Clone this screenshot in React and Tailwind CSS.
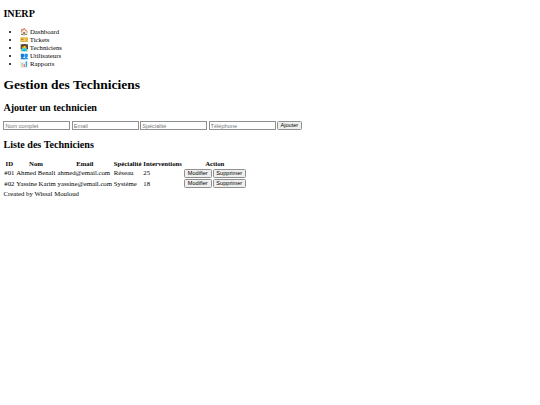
import React from 'react';

const navItems = [
  ['🏠', 'Dashboard'],
  ['🎫', 'Tickets'],
  ['🧑‍💻', 'Techniciens'],
  ['👥', 'Utilisateurs'],
  ['📊', 'Rapports'],
];

const techs = [
  { id: '#01', nom: 'Ahmed Benali', email: 'ahmed@email.com', spec: 'Réseau', nb: 25 },
  { id: '#02', nom: 'Yassine Karim', email: 'yassine@email.com', spec: 'Système', nb: 18 },
];

const inputCls =
  "w-[67px] h-[9px] border border-[#8f8f8f] bg-white px-px text-[5.6px] leading-none font-['Liberation_Sans',sans-serif] placeholder:text-[#757575]";
const btnCls =
  "h-[9px] px-[2.5px] border border-[#8f8f8f] rounded-[1.5px] bg-[#efefef] text-[5.6px] leading-none text-black font-['Liberation_Sans',sans-serif]";
const thCls = 'px-[0.9px] py-[0.5px] font-bold text-center';
const tdCls = 'px-[0.9px] py-[0.8px]';

export default function App() {
  return (
    <div className="min-h-[405px] bg-white px-[3.4px] text-[6.75px] leading-[7.8px] text-black opacity-[0.99] font-['Liberation_Serif',serif]">
      <header>
        <h2 className="pt-[8.4px] text-[10.125px] leading-[11.6px] font-bold">INERP</h2>
        <ul className="mt-[8.4px] list-disc pl-[16.9px]">
          {navItems.map(([icon, label]) => (
            <li key={label} className="h-[8px]">
              {icon} {label}
            </li>
          ))}
        </ul>
      </header>
      <h1 className="mt-[9px] text-[13.5px] leading-[15.5px] font-bold">Gestion des Techniciens</h1>
      <h2 className="mt-[9.4px] text-[10.125px] leading-[11.6px] font-bold">Ajouter un technicien</h2>
      <form className="mt-[7.4px] flex items-center gap-[1.4px]">
        <input className={inputCls} placeholder="Nom complet" />
        <input className={inputCls} placeholder="Email" />
        <input className={inputCls} placeholder="Spécialité" />
        <input className={inputCls} placeholder="Téléphone" />
        <button type="button" className={btnCls}>Ajouter</button>
      </form>
      <h2 className="mt-[8.4px] text-[10.125px] leading-[11.6px] font-bold">Liste des Techniciens</h2>
      <table className="mt-[9px] border-separate border-spacing-[0.84px]">
        <thead>
          <tr>
            <th className={thCls}>ID</th>
            <th className={thCls}>Nom</th>
            <th className={thCls}>Email</th>
            <th className={thCls}>Spécialité</th>
            <th className={thCls}>Interventions</th>
            <th className={thCls}>Action</th>
          </tr>
        </thead>
        <tbody>
          {techs.map((t) => (
            <tr key={t.id}>
              <td className={tdCls}>{t.id}</td>
              <td className={tdCls}>{t.nom}</td>
              <td className={tdCls}>{t.email}</td>
              <td className={tdCls}>{t.spec}</td>
              <td className={tdCls}>{t.nb}</td>
              <td className={tdCls}>
                <div className="flex gap-[1px]">
                  <button type="button" className={`${btnCls} w-[28px]`}>Modifier</button>
                  <button type="button" className={`${btnCls} w-[33px]`}>Supprimer</button>
                </div>
              </td>
            </tr>
          ))}
        </tbody>
      </table>
      <p className="mt-[0.5px]">Created by Wissal Mouloud</p>
    </div>
  );
}
